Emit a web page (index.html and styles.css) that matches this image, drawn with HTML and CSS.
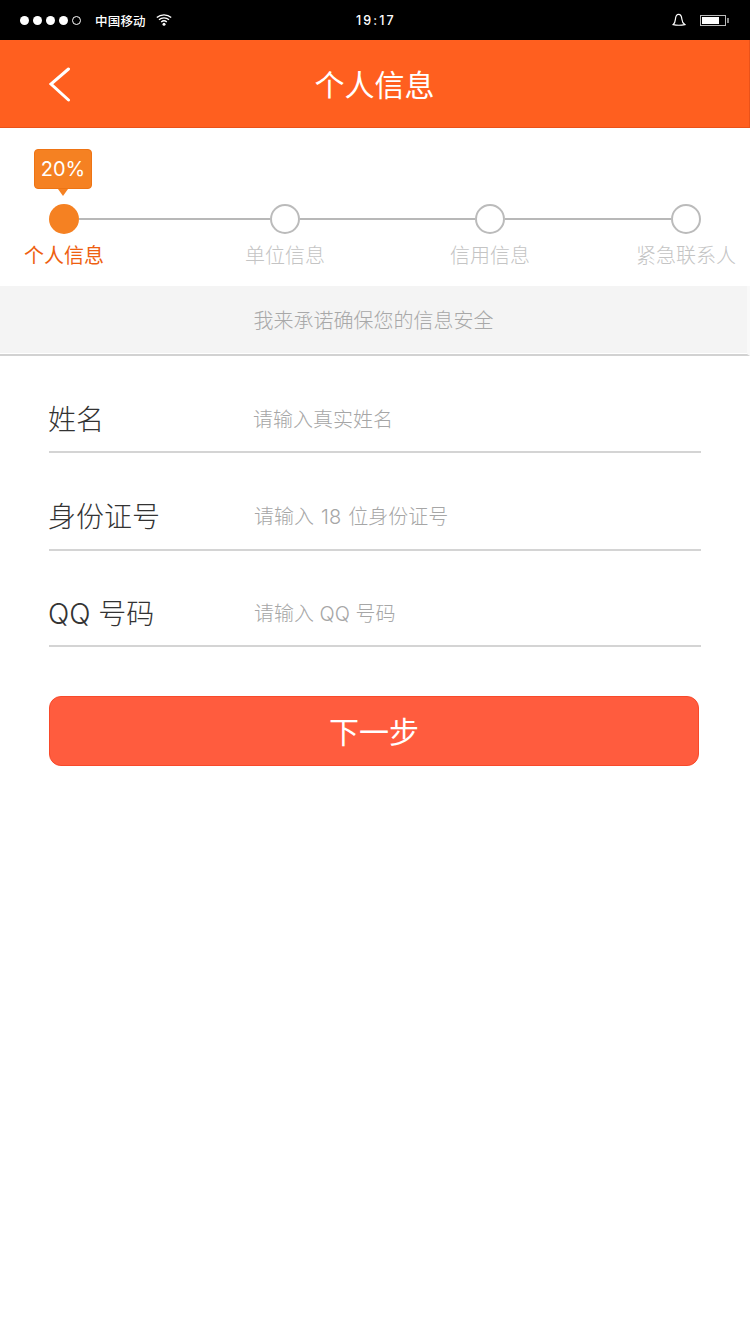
FILE: index.html
```html
<!DOCTYPE html>
<html lang="zh-CN">
<head><meta charset="UTF-8"/><meta name="viewport" content="width=device-width, initial-scale=1.0"/>
<title>个人信息</title>
<link rel="stylesheet" href="styles.css">
</head><body>
<div class="app">
 <div class="status">
  <div class="signal"><i></i><i></i><i></i><i></i><i class="off"></i></div>
  <span class="carrier">中国移动</span>
  <svg class="wifi" width="16" height="12" viewBox="0 0 16 12" fill="none" stroke="#fff" stroke-width="1.3"><path d="M.8 3.6C4.8-.1 11.2-.1 15.2 3.6"/><path d="M3 5.8C5.8 3.2 10.2 3.2 13 5.8"/><path d="M5.2 8C6.8 6.6 9.2 6.6 10.8 8"/><circle cx="8" cy="10.2" r="1.5" fill="#fff" stroke="none"/></svg>
  <span class="time">19:17</span>
  <svg class="bell" width="14" height="14" viewBox="0 0 14 14" fill="none" stroke="#fff" stroke-width="1.2"><path d="M1.2 11.6C2.8 10.2 3.2 8.6 3.4 6.4 3.6 3.4 4.8 1.4 6.6 1.4 8.4 1.4 9.6 3.4 9.9 6.2 10.1 8.4 10.6 10.2 12.8 11.6 9.2 12.4 4.6 12.4 1.2 11.6Z"/></svg>
  <div class="battery"><b></b></div><span class="nub"></span>
 </div>
 <div class="header">
  <svg class="back" width="24" height="36" viewBox="0 0 24 36" fill="none" stroke="#fff" stroke-width="3" stroke-linecap="round"><path d="M19.5 3 2 18 19.5 34"/></svg>
  <h1>个人信息</h1>
 </div>
 <div class="progress">
  <div class="tip">20%</div>
  <div class="track">
   <span class="dot on"></span><span class="seg s1"></span>
   <span class="dot"></span><span class="seg s2"></span>
   <span class="dot"></span><span class="seg s3"></span>
   <span class="dot"></span>
  </div>
  <div class="labels">
   <span class="on">个人信息</span>
   <span>单位信息</span>
   <span>信用信息</span>
   <span>紧急联系人</span>
  </div>
 </div>
 <div class="notice">我来承诺确保您的信息安全</div>
 <form class="form">
  <label class="row"><span>姓名</span><input placeholder="请输入真实姓名"/></label>
  <label class="row"><span>身份证号</span><input placeholder="请输入 18 位身份证号"/></label>
  <label class="row"><span>QQ 号码</span><input placeholder="请输入 QQ 号码"/></label>
  <button type="button" class="next">下一步</button>
 </form>
</div>
</body></html>
```

FILE: styles.css
```css
*{box-sizing:border-box;}
body{margin:0;background:#fff;font-family:Inter,"Noto Sans CJK SC",sans-serif;font-weight:300;}
.app{width:750px;height:1334px;overflow:hidden;}
.status{height:40px;background:#000;color:#fff;display:flex;align-items:center;padding:0 0 0 20px;}
.signal{display:flex;gap:4px;width:75px;}
.signal i{width:9px;height:9px;border-radius:50%;background:#fff;}
.signal i.off{background:none;border:1px solid #fff;}
.carrier{font-size:12.5px;font-weight:500;width:61px;letter-spacing:.2px;}
.wifi{width:16px;}
.time{font-size:12.5px;font-weight:500;letter-spacing:2.1px;margin-left:184px;width:100px;}
.bell{margin-left:216px;}
.battery{width:26px;height:11px;border:1px solid #bbb;margin-left:14px;padding:1px;}
.battery b{display:block;width:17px;height:100%;background:#fff;}
.nub{width:2px;height:5px;background:#888;margin-left:1px;}
.header{height:88px;background:#ff5f1f;border-bottom:1px solid #e9521a;border-right:1px solid #e9521a;display:flex;align-items:center;justify-content:center;position:relative;padding-top:2px;}
.header h1{margin:0;font-size:30px;font-weight:400;color:#fff;line-height:1;}
.back{position:absolute;left:49px;top:26px;}
.progress{height:158px;padding-top:21px;}
.tip{width:58px;height:40px;margin-left:34px;background:#f58122;border:1px solid #ee7414;border-radius:4px;color:#fff;font-size:20px;font-weight:400;line-height:38px;text-align:center;position:relative;}
.tip:after{content:"";position:absolute;left:23px;top:39px;border:5px solid transparent;border-top:7px solid #f58122;border-bottom:0;}
.track{display:flex;align-items:center;margin:15px 0 0 49px;}
.dot{width:30px;height:30px;border-radius:50%;border:2px solid #bbb;flex:none;}
.dot.on{background:#f58122;border:0;}
.seg{height:2px;background:#b8b8b8;}
.s1{width:191px;}
.s2{width:175px;}
.s3{width:166px;}
.labels{display:flex;margin:8px 0 0 24px;font-size:20px;line-height:28px;color:#c4c4c4;white-space:nowrap;}
.labels .on{color:#ee6010;font-weight:400;}
.labels span:nth-child(2){margin-left:141px;}
.labels span:nth-child(3){margin-left:125px;}
.labels span:nth-child(4){margin-left:106px;}
.notice{height:70px;padding-bottom:2px;background:#f4f4f4;border-bottom:2px solid #d2d2d2;border-right:3px solid #f9f9f9;box-shadow:inset 0 -1px 0 #fff;display:flex;align-items:center;justify-content:center;font-size:20px;color:#a8a8a8;}
.form{padding:0 49px;}
.row{display:flex;align-items:center;height:97px;padding-top:28px;border-bottom:2px solid #d4d4d4;}
.row:nth-child(2){height:98px;}
.row:nth-child(2) input{word-spacing:1.5px;}
.row:nth-child(3){height:96px;}
.row span{width:206px;margin-left:-1px;font-size:28px;color:#333;}
.row input{flex:1;border:0;outline:0;padding:4px 0 0;background:none;font:inherit;font-size:20px;color:#333;}
.row:first-child span{width:205px;}
.row input::placeholder{color:#a6a6a6;opacity:1;}
.next{display:block;width:650px;height:70px;margin-top:49px;padding:0 0 2px;background:#ff5c3e;border:1px solid #f8492a;border-radius:12px;color:#fff;font:inherit;font-size:30px;font-weight:400;}
```
